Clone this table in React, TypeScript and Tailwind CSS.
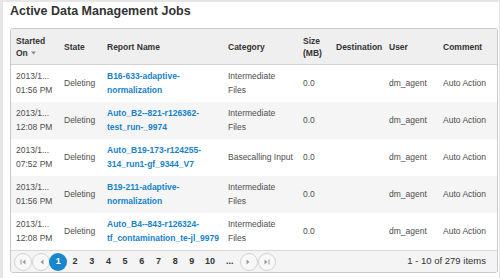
import React from "react";

type Job = {
  date: string;
  time: string;
  state: string;
  report: string;
  category: string;
  size: string;
  destination: string;
  user: string;
  comment: string;
};

const JOBS: Job[] = [
  { date: "2013/1...", time: "01:56 PM", state: "Deleting", report: "B16-633-adaptive-normalization", category: "Intermediate Files", size: "0.0", destination: "", user: "dm_agent", comment: "Auto Action" },
  { date: "2013/1...", time: "12:08 PM", state: "Deleting", report: "Auto_B2--821-r126362-test_run-_9974", category: "Intermediate Files", size: "0.0", destination: "", user: "dm_agent", comment: "Auto Action" },
  { date: "2013/1...", time: "07:52 PM", state: "Deleting", report: "Auto_B19-173-r124255-314_run1-gf_9344_V7", category: "Basecalling Input", size: "0.0", destination: "", user: "dm_agent", comment: "Auto Action" },
  { date: "2013/1...", time: "01:56 PM", state: "Deleting", report: "B19-211-adaptive-normalization", category: "Intermediate Files", size: "0.0", destination: "", user: "dm_agent", comment: "Auto Action" },
  { date: "2013/1...", time: "12:08 PM", state: "Deleting", report: "Auto_B4--843-r126324-tf_contamination_te-jl_9979", category: "Intermediate Files", size: "0.0", destination: "", user: "dm_agent", comment: "Auto Action" },
];

const COLS = "grid grid-cols-[48px_43px_121px_75px_33px_53px_54px_59px]";

function PagerCircle({ children }: { children: React.ReactNode }) {
  return (
    <span className="w-[18px] h-[18px] rounded-full border border-[#d3d3d3] bg-[#f8f8f8] flex items-center justify-center text-[#9a9a9a]">
      {children}
    </span>
  );
}

function Arrow({ dir, bar }: { dir: "left" | "right"; bar?: boolean }) {
  return (
    <svg width="7" height="6" viewBox="0 0 7 6" fill="currentColor">
      {dir === "left" ? (
        <>
          {bar && <rect x="0.5" y="0.5" width="1" height="5" />}
          <path d="M5.5 0.5 L2.5 3 L5.5 5.5 Z" />
        </>
      ) : (
        <>
          <path d="M1.5 0.5 L4.5 3 L1.5 5.5 Z" />
          {bar && <rect x="5.5" y="0.5" width="1" height="5" />}
        </>
      )}
    </svg>
  );
}

export default function App() {
  const pages = [1, 2, 3, 4, 5, 6, 7, 8, 9];
  return (
    <div className="w-[500px] h-[278px] overflow-hidden bg-[#e6e6e6] pl-[3px] pt-[2px] pr-[1px] font-['Liberation_Sans',Arial,sans-serif]">
      <div className="bg-white h-full px-[7px] pt-[1px]">
        <h1 className="text-[12.5px] leading-[16px] font-bold text-[#333] mb-[9px]">
          Active Data Management Jobs
        </h1>
        <div className="w-[488px] border border-[#c9c9c9] rounded-[3px] overflow-hidden text-[8.5px] text-[#4d4d4d]">
          {/* header */}
          <div className={`${COLS} h-[36px] bg-[#efefef] border-b border-[#d2d2d2] font-bold text-[#333] leading-[12px]`}>
            <div className="pl-[5px] pr-[4px] flex flex-col justify-center">
              <span>Started</span>
              <span className="flex items-center gap-[3px]">
                On
                <svg width="5" height="4" viewBox="0 0 5 4" fill="#8a8a8a">
                  <path d="M0 0.5 L5 0.5 L2.5 3.5 Z" />
                </svg>
              </span>
            </div>
            <div className="pl-[5px] pr-[4px] flex items-center">State</div>
            <div className="pl-[5px] pr-[4px] flex items-center">Report Name</div>
            <div className="pl-[5px] pr-[4px] flex items-center">Category</div>
            <div className="pl-[5px] pr-[2px] flex items-center">Size (MB)</div>
            <div className="pl-[5px] pr-[2px] flex items-center">Destination</div>
            <div className="pl-[5px] pr-[4px] flex items-center">User</div>
            <div className="pl-[5px] pr-[4px] flex items-center">Comment</div>
          </div>
          {/* rows */}
          {JOBS.map((job, i) => (
            <div
              key={i}
              className={`${COLS} h-[37px] leading-[13.5px] ${i % 2 === 1 ? "bg-[#f5f5f5]" : "bg-white"}`}
            >
              <div className="pl-[5px] pr-[2px] flex flex-col justify-center whitespace-nowrap">
                <span>{job.date}</span>
                <span>{job.time}</span>
              </div>
              <div className="pl-[5px] pr-[2px] flex items-center">{job.state}</div>
              <div className="pl-[5px] pr-[1px] flex items-center">
                <a className="font-bold text-[#1782c8]">{job.report}</a>
              </div>
              <div className="pl-[5px] pr-[4px] flex items-center">{job.category}</div>
              <div className="pl-[5px] pr-[2px] flex items-center">{job.size}</div>
              <div className="pl-[5px] pr-[2px] flex items-center">{job.destination}</div>
              <div className="pl-[5px] pr-[2px] flex items-center">{job.user}</div>
              <div className="pl-[5px] pr-[2px] flex items-center whitespace-nowrap">{job.comment}</div>
            </div>
          ))}
          {/* pager */}
          <div className="h-[22px] bg-[#f4f4f4] border-t border-[#d8d8d8] flex items-center pl-[3px] pr-[11px]">
            <PagerCircle><Arrow dir="left" bar /></PagerCircle>
            <PagerCircle><Arrow dir="left" /></PagerCircle>
            {pages.map((p) => (
              <span key={p} className="w-[16.7px] h-[18px] flex items-center justify-center font-bold text-[9px] text-[#333]">
                {p === 1 ? (
                  <span className="shrink-0 w-[18px] h-[18px] rounded-full bg-[#1a86cc] text-white flex items-center justify-center">
                    1
                  </span>
                ) : (
                  p
                )}
              </span>
            ))}
            <span className="w-[19.4px] flex justify-center font-bold text-[9px] text-[#333]">10</span>
            <span className="w-[20.3px] flex justify-center font-bold text-[9px] text-[#333]">...</span>
            <PagerCircle><Arrow dir="right" /></PagerCircle>
            <PagerCircle><Arrow dir="right" bar /></PagerCircle>
            <span className="ml-auto text-[9.5px] text-[#333]">1 - 10 of 279 items</span>
          </div>
        </div>
      </div>
    </div>
  );
}
